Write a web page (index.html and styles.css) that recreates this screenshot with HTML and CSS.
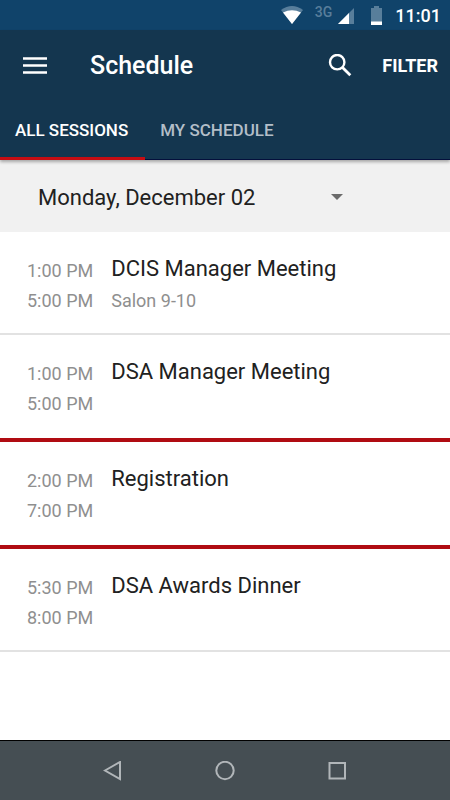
FILE: index.html
```
<!DOCTYPE html>
<html lang="en">
<head>
    <meta charset="UTF-8">
    <meta name="viewport" content="width=device-width, initial-scale=1">
    <title>Schedule</title>
    <link rel="stylesheet" href="styles.css">
</head>
<body>

<div class="status-bar">
    <svg class="wifi" width="22" height="18" viewBox="0 0 22 18">
        <path d="M0 4Q11 -4 22 4L11 18Z" fill="#587e9b"/>
        <path d="M2 6.5Q11 2 20 6.5L11 18Z" fill="#fff"/>
    </svg>
    <span class="network">3G</span>
    <svg class="signal" width="16" height="16" viewBox="0 0 16 16">
        <path d="M0 16L16 0V16Z" fill="#587e9b"/>
        <path d="M0 16L11 5V16Z" fill="#fff"/>
    </svg>
    <svg class="battery" width="11" height="19" viewBox="0 0 11 19">
        <path d="M3 0H8V2H11V19H0V2H3Z" fill="#587e9b"/>
        <path d="M0 15.5H11V19H0Z" fill="#fff"/>
    </svg>
    <span class="clock">11:01</span>
</div>

<header class="app-header">
    <div class="toolbar">
        <button class="menu" aria-label="Menu">
            <svg width="24" height="18" viewBox="0 0 24 18" fill="#fff">
                <path d="M0 0.2H24V2.8H0ZM0 7.2H24V9.8H0ZM0 14.2H24V16.8H0Z"/>
            </svg>
        </button>
        <h1>Schedule</h1>
        <button class="search" aria-label="Search">
            <svg width="24" height="24" viewBox="0 0 24 24" fill="none" stroke="#fff">
                <circle cx="9.2" cy="8.2" r="7.2" stroke-width="2.4"/>
                <path d="M14 13L22.3 21.3" stroke-width="2.8"/>
            </svg>
        </button>
        <button class="filter">FILTER</button>
    </div>
    <nav class="tabs">
        <a href="#all" class="tab active">ALL SESSIONS</a>
        <a href="#mine" class="tab">MY SCHEDULE</a>
    </nav>
</header>

<main>
    <div class="day-bar">
        <div class="day-picker">
            <select aria-label="Day">
                <option>Monday, December 02</option>
            </select>
            <svg class="caret" width="12" height="6" viewBox="0 0 12 6">
                <path d="M0 0H12L6 6Z" fill="#6b6b6b"/>
            </svg>
        </div>
    </div>

    <ul class="sessions">
        <li class="session">
            <div class="times"><time>1:00 PM</time><time>5:00 PM</time></div>
            <div class="details">
                <h2>DCIS Manager Meeting</h2>
                <p>Salon 9-10</p>
            </div>
        </li>
        <li class="session">
            <div class="times"><time>1:00 PM</time><time>5:00 PM</time></div>
            <div class="details">
                <h2>DSA Manager Meeting</h2>
            </div>
        </li>
        <li class="session new-slot">
            <div class="times"><time>2:00 PM</time><time>7:00 PM</time></div>
            <div class="details">
                <h2>Registration</h2>
            </div>
        </li>
        <li class="session new-slot">
            <div class="times"><time>5:30 PM</time><time>8:00 PM</time></div>
            <div class="details">
                <h2>DSA Awards Dinner</h2>
            </div>
        </li>
    </ul>
</main>

<footer class="nav-bar">
    <button aria-label="Back">
        <svg width="20" height="20" viewBox="0 0 20 20">
            <path d="M2 9.5L17 1V18Z"/>
        </svg>
    </button>
    <button aria-label="Home">
        <svg width="20" height="20" viewBox="0 0 20 20">
            <circle cx="10" cy="9.5" r="8.7"/>
        </svg>
    </button>
    <button aria-label="Recent apps">
        <svg width="20" height="20" viewBox="0 0 20 20">
            <rect x="2.5" y="2" width="15.5" height="15.5"/>
        </svg>
    </button>
</footer>

</body>
</html>
```
FILE: styles.css
```
* { box-sizing: border-box; }
body {
    margin: 0;
    min-height: 100vh;
    display: flex;
    flex-direction: column;
    font-family: Roboto, sans-serif;
    color: #212121;
    background: #fff;
}
h1, h2, p, ul { margin: 0; padding: 0; }
button {
    padding: 0;
    border: 0;
    background: none;
    color: inherit;
    font-family: inherit;
    cursor: pointer;
}
svg { display: block; }

.status-bar {
    display: flex;
    align-items: center;
    justify-content: flex-end;
    height: 30px;
    padding-right: 9px;
    background: #10436a;
    color: #fff;
}
.network {
    margin: 0 6px 6px 12px;
    color: #587e9b;
    font-size: 14px;
    font-weight: 500;
    line-height: 16px;
}
.signal { margin-top: 2px; }
.battery { margin: 0 13px 0 17px; }
.clock { font-size: 18px; font-weight: 500; }

.app-header {
    position: relative;
    background: #14364f;
    color: #fff;
    border-bottom: 1px solid #04103c;
    box-shadow: 0 2px 3px rgba(0, 0, 0, 0.3);
}
.toolbar {
    display: flex;
    align-items: center;
    height: 71px;
    padding: 0 12px 0 23px;
}
.toolbar h1 {
    flex: 1;
    margin-left: 43px;
    font-size: 25px;
    font-weight: 500;
}
.search { margin-right: 30px; }
.filter { font-size: 18px; font-weight: 700; }
/* the active underline covers the header's border */
.tabs {
    display: flex;
    margin-bottom: -1px;
}
.tab {
    height: 59px;
    padding: 0 17px 0 15px;
    border-bottom: 3px solid transparent;
    color: #b3bec8;
    font-size: 17px;
    font-weight: 500;
    line-height: 58px;
    text-decoration: none;
}
.tab.active {
    color: #fff;
    border-bottom-color: #c60d13;
}

main { flex: 1; }
.day-bar {
    padding: 17px 38px 15px;
    background: #f1f1f1;
}
.day-picker {
    display: flex;
    align-items: center;
    width: 305px;
    height: 40px;
}
.day-picker select {
    flex: 1;
    height: 40px;
    padding: 0;
    border: 0;
    appearance: none;
    background: none;
    color: inherit;
    font-family: inherit;
    font-size: 22px;
}

.sessions { list-style: none; }
.session {
    display: flex;
    gap: 18px;
    padding: 24px 27px 17px;
    border-bottom: 2px solid #e2e2e2;
    line-height: 30px;
}
/* red bar between different start times */
.session.new-slot { border-top: 4px solid #b00c12; }
.session:has(+ .new-slot) { border-bottom-color: #fff; }
.times {
    display: flex;
    flex-direction: column;
    color: #8f8f8f;
    font-size: 18px;
}
.details h2 {
    margin: -2px 0 2px;
    font-size: 22px;
    font-weight: 400;
    line-height: 30px;
}
.details p {
    color: #8f8f8f;
    font-size: 18px;
}

.nav-bar {
    display: flex;
    justify-content: center;
    gap: 92px;
    height: 60px;
    border-top: 1px solid #000;
    background: #454e53;
}
.nav-bar svg {
    fill: none;
    stroke: #b1b6b9;
    stroke-width: 2;
}
```
